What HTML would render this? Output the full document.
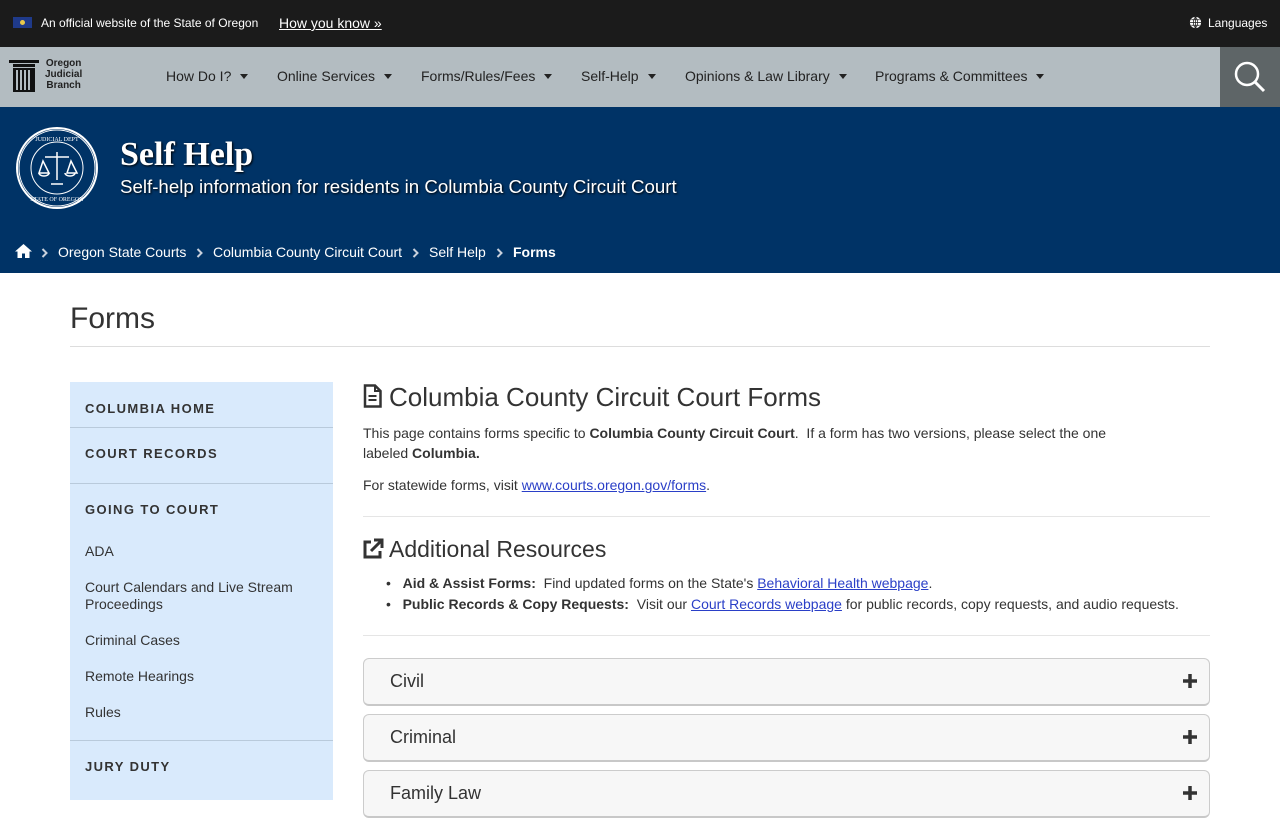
<!DOCTYPE html>
<html><head><meta charset="utf-8"><style>
*{box-sizing:border-box;margin:0;padding:0}
body{width:1280px;height:800px;overflow:hidden;font-family:"Liberation Sans",Arial,sans-serif;background:#fff;color:#333;position:relative}
.abs{position:absolute}
#top{left:0;top:0;width:1280px;height:47px;background:#1b1b1b;color:#fff;font-size:12px}
#nav{left:0;top:47px;width:1280px;height:60px;background:#b3bcc1}
#nav .item{position:absolute;top:21px;font-size:14px;color:#222}
.caret{display:inline-block;width:0;height:0;border-left:4.5px solid transparent;border-right:4.5px solid transparent;border-top:5px solid #222;margin-left:9px;vertical-align:2px}
#search{left:1220px;top:47px;width:60px;height:60px;background:#5e6567}
#hero{left:0;top:107px;width:1280px;height:166px;background:#003366;color:#fff}
.crumb{position:absolute;top:137px;font-size:14px;color:#fff}
.sep{position:absolute;top:141px}
#side{left:70px;top:382px;width:263px;height:418px;background:#d9eafc}
.sh{position:absolute;left:15px;font-size:13px;font-weight:bold;letter-spacing:1.4px;color:#333}
.sl{position:absolute;left:15px;font-size:14px;color:#333;line-height:17px}
.hr{position:absolute;left:0;width:263px;height:1px;background:#b9cadb}
a{color:#2a3fc7;text-decoration:underline}
.acc{position:absolute;left:363px;width:847px;height:48px;border:1px solid #ccc;border-bottom:2px solid #c8c8c8;border-radius:6px;background:#f7f7f7;font-size:18px;color:#333}
.acc span{position:absolute;left:26px;top:12px}
.acc svg{position:absolute;right:12px;top:15px}
</style></head><body>
<div id="top" class="abs">
 <div class="abs" style="left:13px;top:17px;width:19px;height:11px;background:#1f3a8a"><div style="margin:3px auto;width:5px;height:5px;background:#e8c84a;border-radius:50%"></div></div>
 <div class="abs" style="left:41px;top:16px">An official website of the State of Oregon</div>
 <div class="abs" style="left:279px;top:15px;font-size:14px;text-decoration:underline">How you know »</div>
 <svg class="abs" style="left:1189px;top:16px" width="13" height="13" viewBox="0 0 14 14"><circle cx="7" cy="7" r="6" fill="#fff"/><path d="M1 7h12M7 1v12M2.5 4h9M2.5 10h9M7 1c-3 3-3 9 0 12M7 1c3 3 3 9 0 12" stroke="#1b1b1b" stroke-width=".8" fill="none"/></svg>
 <div class="abs" style="left:1208px;top:16px">Languages</div>
</div>
<div id="nav" class="abs">
 <svg class="abs" style="left:9px;top:13px" width="30" height="32" viewBox="0 0 30 32"><rect x="0" y="0" width="30" height="3" fill="#111"/><rect x="4" y="4" width="22" height="3" fill="#111"/><rect x="4" y="8" width="22" height="24" fill="#111"/><g fill="#b3bcc1"><rect x="7" y="10" width="2" height="20"/><rect x="11" y="10" width="2" height="20"/><rect x="15" y="10" width="2" height="20"/><rect x="19" y="10" width="2" height="20"/></g></svg>
 <div class="abs" style="left:45px;top:11px;font-size:10px;font-weight:bold;line-height:11px;text-align:center;color:#222">Oregon<br>Judicial<br>Branch</div>
 <div class="item" style="left:166px">How Do I?<span class="caret"></span></div>
 <div class="item" style="left:277px">Online Services<span class="caret"></span></div>
 <div class="item" style="left:421px">Forms/Rules/Fees<span class="caret"></span></div>
 <div class="item" style="left:581px">Self-Help<span class="caret"></span></div>
 <div class="item" style="left:685px">Opinions &amp; Law Library<span class="caret"></span></div>
 <div class="item" style="left:875px">Programs &amp; Committees<span class="caret"></span></div>
</div>
<div id="search" class="abs"><svg width="60" height="60"><circle cx="27" cy="27" r="11" stroke="#fff" stroke-width="2.5" fill="none"/><path d="M35 35l9 9" stroke="#fff" stroke-width="3"/></svg></div>
<div id="hero" class="abs">
 <svg class="abs" style="left:15px;top:19px" width="84" height="84" viewBox="0 0 84 84"><circle cx="42" cy="42" r="41" fill="#fff"/><circle cx="42" cy="42" r="39" fill="#003366"/><circle cx="42" cy="42" r="38" stroke="#fff" fill="none" stroke-width="1"/><circle cx="42" cy="42" r="26" stroke="#fff" fill="none" stroke-width="1"/><path d="M42 26v28M30 31h24M28 35l-4 12h10zM56 35l-4 12h10zM24 47a5 3 0 0 0 10 0M50 47a5 3 0 0 0 10 0M36 58h12" stroke="#fff" stroke-width="1.5" fill="none"/><text x="42" y="15" font-size="6" fill="#fff" text-anchor="middle" font-family="Liberation Serif">JUDICIAL DEPT</text><text x="42" y="75" font-size="6" fill="#fff" text-anchor="middle" font-family="Liberation Serif">STATE OF OREGON</text></svg>
 <div class="abs" style="left:120px;top:29px;font-family:'Liberation Serif',serif;font-size:34px;font-weight:bold;text-shadow:1px 1px 2px #000">Self Help</div>
 <div class="abs" style="left:120px;top:69px;font-size:18.7px;text-shadow:1px 1px 2px #000">Self-help information for residents in Columbia County Circuit Court</div>
 <svg class="abs" style="left:15px;top:137px" width="17" height="14" viewBox="0 0 17 14"><path d="M8.5 0L0 7.5h2.5V14h4.5V9.5h3V14h4.5V7.5H17z" fill="#fff"/></svg>
 <svg class="sep" style="left:41px" width="7" height="10" viewBox="0 0 7 10"><path d="M1.5 1l4 4-4 4" stroke="#c8d0dc" stroke-width="2" fill="none"/></svg><span class="crumb" style="left:58px">Oregon State Courts</span>
 <svg class="sep" style="left:196px" width="7" height="10" viewBox="0 0 7 10"><path d="M1.5 1l4 4-4 4" stroke="#c8d0dc" stroke-width="2" fill="none"/></svg><span class="crumb" style="left:213px">Columbia County Circuit Court</span>
 <svg class="sep" style="left:412px" width="7" height="10" viewBox="0 0 7 10"><path d="M1.5 1l4 4-4 4" stroke="#c8d0dc" stroke-width="2" fill="none"/></svg><span class="crumb" style="left:429px">Self Help</span>
 <svg class="sep" style="left:496px" width="7" height="10" viewBox="0 0 7 10"><path d="M1.5 1l4 4-4 4" stroke="#c8d0dc" stroke-width="2" fill="none"/></svg><span class="crumb" style="left:513px;font-weight:bold">Forms</span>
</div>
<div class="abs" style="left:70px;top:302px;font-size:30px;color:#333">Forms</div>
<div class="abs" style="left:70px;top:346px;width:1140px;height:1px;background:#ddd"></div>
<div id="side" class="abs">
 <div class="sh" style="top:19px">COLUMBIA HOME</div><div class="hr" style="top:45px"></div>
 <div class="sh" style="top:64px">COURT RECORDS</div><div class="hr" style="top:101px"></div>
 <div class="sh" style="top:120px">GOING TO COURT</div>
 <div class="sl" style="top:161px">ADA</div>
 <div class="sl" style="top:197px">Court Calendars and Live Stream<br>Proceedings</div>
 <div class="sl" style="top:250px">Criminal Cases</div>
 <div class="sl" style="top:286px">Remote Hearings</div>
 <div class="sl" style="top:322px">Rules</div>
 <div class="hr" style="top:358px"></div>
 <div class="sh" style="top:377px">JURY DUTY</div>
</div>
<svg class="abs" style="left:363px;top:384px" width="19" height="24" viewBox="0 0 19 24"><path d="M2 1.5h10l5.5 5.5v15.5h-15.5z" stroke="#333" stroke-width="2.5" fill="none"/><path d="M12 1.5v5.5h5.5" stroke="#333" stroke-width="2" fill="none"/><path d="M5.5 12h8M5.5 16h8" stroke="#333" stroke-width="2"/></svg>
<div class="abs" style="left:389px;top:382px;font-size:26px;color:#333">Columbia County Circuit Court Forms</div>
<div class="abs" style="left:363px;top:423px;font-size:14px;line-height:20px;width:780px">This page contains forms specific to <b>Columbia County Circuit Court</b>.&nbsp; If a form has two versions, please select the one labeled <b>Columbia.</b></div>
<div class="abs" style="left:363px;top:477px;font-size:14px">For statewide forms, visit <a>www.courts.oregon.gov/forms</a>.</div>
<div class="abs" style="left:363px;top:516px;width:847px;height:1px;background:#e5e5e5"></div>
<svg class="abs" style="left:362px;top:538px" width="22" height="22" viewBox="0 0 22 22"><path d="M9 4H3v15h15v-6" stroke="#333" stroke-width="3" fill="none"/><path d="M9 13L19 3M12 2h8v8" stroke="#333" stroke-width="3" fill="none"/></svg>
<div class="abs" style="left:389px;top:536px;font-size:23px;color:#333">Additional Resources</div>
<div class="abs" style="left:386px;top:573px;font-size:14px;line-height:21px">
 <div>•&nbsp;&nbsp;&nbsp;<b>Aid &amp; Assist Forms:</b>&nbsp; Find updated forms on the State's <a>Behavioral Health webpage</a>.</div>
 <div>•&nbsp;&nbsp;&nbsp;<b>Public Records &amp; Copy Requests:</b>&nbsp; Visit our <a>Court Records webpage</a> for public records, copy requests, and audio requests.</div>
</div>
<div class="abs" style="left:363px;top:635px;width:847px;height:1px;background:#e5e5e5"></div>
<div class="acc" style="top:658px"><span>Civil</span><svg width="14" height="14"><path d="M7 0v14M0 7h14" stroke="#333" stroke-width="3.5"/></svg></div>
<div class="acc" style="top:714px"><span>Criminal</span><svg width="14" height="14"><path d="M7 0v14M0 7h14" stroke="#333" stroke-width="3.5"/></svg></div>
<div class="acc" style="top:770px"><span>Family Law</span><svg width="14" height="14"><path d="M7 0v14M0 7h14" stroke="#333" stroke-width="3.5"/></svg></div>
</body></html>
